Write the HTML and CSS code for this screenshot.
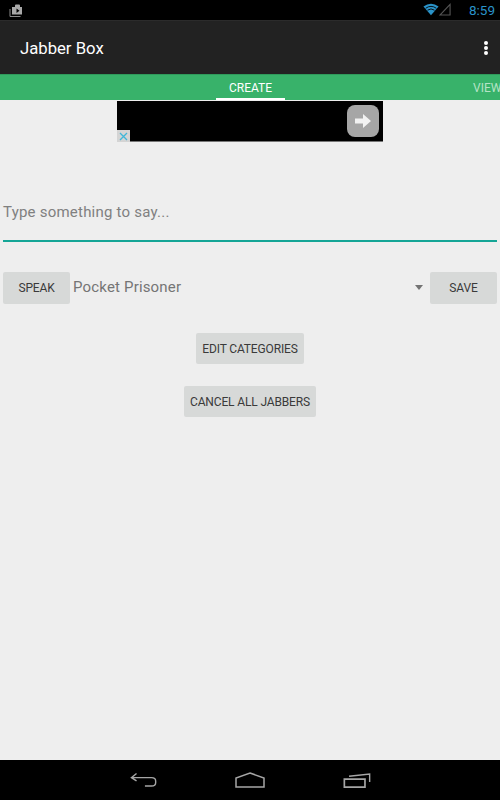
FILE: index.html
```html
<!DOCTYPE html>
<html lang="en">
<head>
  <meta charset="UTF-8">
  <meta name="viewport" content="width=device-width, initial-scale=1.0">
  <link rel="stylesheet" href="styles.css">
</head>
<body>
  <div class="screen">
    <div class="status-bar">
      <svg class="status-left" width="16" height="16" viewBox="0 0 16 16">
        <path d="M2 7v7.500h10.500" fill="none" stroke="#8a8a8a" stroke-width="1"/>
        <path d="M4 5h3V3.500Q7 2.500 8 2.500h3q1 0 1 1V5h2v7.500H4z" fill="#a8a8a8"/>
        <path d="M8.500 6.500l3 2.200-3 2.200z" fill="#000"/>
      </svg>
      <div class="status-right">
        <svg class="wifi" width="16" height="13" viewBox="0 0 18 14">
          <path d="M0.500 3.500Q9-2.500 17.500 3.500L9 13.500z" fill="#2a93c9"/>
          <path d="M3 5.600Q9 1.300 15 5.600M5 7.800Q9 4.900 13 7.800" fill="none" stroke="#000" stroke-width="1"/>
        </svg>
        <svg class="signal" width="12" height="13" viewBox="0 0 13 14">
          <path d="M12 1.500V13H1z" fill="none" stroke="#555" stroke-width="1.200"/>
        </svg>
        <span class="clock">8:59</span>
      </div>
    </div>

    <div class="action-bar">
      <div class="app-title">Jabber Box</div>
      <div class="overflow-menu"><span></span><span></span><span></span></div>
    </div>

    <div class="tabs">
      <div class="tab tab-active">CREATE</div>
      <div class="tab tab-next">VIEW</div>
    </div>

    <div class="content">
      <div class="ad">
        <div class="ad-close">
          <svg width="9" height="9" viewBox="0 0 9 9">
            <path d="M1 1l7 7M8 1L1 8" stroke="#3fb6d8" stroke-width="1.300"/>
          </svg>
        </div>
        <div class="ad-arrow">
          <svg width="16" height="14" viewBox="0 0 16 14">
            <path d="M0 4.500h8V0l8 7-8 7V9.500H0z" fill="#f2f2f2"/>
          </svg>
        </div>
      </div>

      <div class="say-input">Type something to say...</div>

      <div class="speak-row">
        <button class="btn btn-row">SPEAK</button>
        <div class="spinner">
          <span>Pocket Prisoner</span>
          <i class="spinner-arrow"></i>
        </div>
        <button class="btn btn-row">SAVE</button>
      </div>

      <div class="actions">
        <button class="btn">EDIT CATEGORIES</button>
        <button class="btn">CANCEL ALL JABBERS</button>
      </div>
    </div>

    <div class="nav-bar">
      <svg width="28" height="16" viewBox="0 0 30 16">
        <path d="M7 1L1.500 5.500 7 9M2 5.500h21q4.500 0 4.500 3.500v2q0 3.500-4.500 3.500h-7" fill="none" stroke="#a6a6a6" stroke-width="1.500"/>
      </svg>
      <svg class="nav-home" width="30" height="16" viewBox="0 0 30 16">
        <path d="M15 1L29 6v9H1V6z" fill="none" stroke="#a6a6a6" stroke-width="1.500"/>
      </svg>
      <svg class="nav-recent" width="28" height="15" viewBox="0 0 29 16">
        <path d="M1 6.500h22v8.500H1z" fill="none" stroke="#a6a6a6" stroke-width="1.800"/>
        <path d="M6 3.500L28 1v8.500" fill="none" stroke="#a6a6a6" stroke-width="1.500"/>
      </svg>
    </div>
  </div>
</body>
</html>
```

FILE: styles.css
```css
* {
  box-sizing: border-box;
}

body {
  margin: 0;
  font-family: Roboto, sans-serif;
  background: #eeeeee;
}

.screen {
  width: 500px;
  height: 800px;
  display: flex;
  flex-direction: column;
  overflow: hidden;
}

.status-bar {
  height: 20px;
  background: #000000;
  display: flex;
  justify-content: space-between;
  align-items: center;
  padding: 0 5px 0 8px;
}

.status-left {
  display: block;
  margin-top: -1px;
}

.status-right {
  display: flex;
  align-items: center;
}

.wifi,
.signal {
  margin-top: -1px;
}

.clock {
  margin-left: 18px;
  font-size: 13.500px;
  color: #2a93c9;
}

.action-bar {
  height: 54px;
  background: #222222;
  border-top: 1px solid #2b2b2b;
  display: flex;
  justify-content: space-between;
  align-items: center;
  padding: 0 12px 0 20px;
}

.app-title {
  padding-top: 1px;
  font-size: 16.700px;
  color: #ffffff;
}

.overflow-menu {
  display: flex;
  flex-direction: column;
  gap: 1px;
}

.overflow-menu span {
  width: 4px;
  height: 4px;
  border-radius: 50%;
  background: #ffffff;
}

.tabs {
  height: 26px;
  background: #38b26a;
  border-top: 1px solid #2f9a5b;
  display: flex;
  justify-content: flex-start;
  padding-left: 216px;
  white-space: nowrap;
}

.tab {
  font-size: 12px;
  height: 25px;
  line-height: 27px;
  text-align: center;
  flex: none;
}

.tab-active {
  width: 69px;
  color: #ffffff;
  border-bottom: 2px solid #ffffff;
}

.tab-next {
  margin-left: 188px;
  color: #b5e3c6;
}

.content {
  flex: 1;
  display: flex;
  flex-direction: column;
  padding: 1px 3px 0;
  background: #eeeeee;
}

.ad {
  position: relative;
  width: 266px;
  height: 41px;
  margin: 0 auto;
  background: #000000;
  border-bottom: 1px solid #777777;
}

.ad-close {
  position: absolute;
  left: 0;
  bottom: -1px;
  width: 13px;
  height: 12px;
  background: #d4d4d4;
  display: flex;
  align-items: center;
  justify-content: center;
}

.ad-arrow {
  position: absolute;
  top: 4px;
  right: 4px;
  width: 32px;
  height: 32px;
  border-radius: 8px;
  background: #a6a6a6;
  display: flex;
  align-items: center;
  justify-content: center;
}

.say-input {
  height: 60px;
  margin-top: 40px;
  padding-top: 20px;
  font-size: 15px;
  line-height: 20px;
  letter-spacing: 0.22px;
  color: #808080;
  border-bottom: 2px solid #14a596;
}

.speak-row {
  display: flex;
  align-items: center;
  margin-top: 30px;
}

.spinner {
  flex: 1;
  display: flex;
  justify-content: space-between;
  align-items: center;
  padding: 0 7px 2px 3px;
  font-size: 15px;
  letter-spacing: 0.17px;
  color: #757575;
}

.spinner-arrow {
  width: 0;
  height: 0;
  margin-top: 1px;
  border-left: 4px solid transparent;
  border-right: 4px solid transparent;
  border-top: 5px solid #737373;
}

.btn {
  height: 31px;
  padding: 0 6px;
  border: none;
  border-radius: 2px;
  background: #d7d9d8;
  font-family: Roboto, sans-serif;
  font-size: 12px;
  letter-spacing: -0.15px;
  color: #3a3a3a;
}

.btn-row {
  width: 67px;
  height: 32px;
  padding: 0;
}

.actions {
  display: flex;
  flex-direction: column;
  align-items: center;
  gap: 22px;
  margin-top: 29px;
}

.nav-bar {
  height: 40px;
  background: #000000;
  display: flex;
  align-items: center;
  padding-left: 130px;
}

.nav-home {
  margin-left: 77px;
}

.nav-recent {
  margin-left: 78px;
}
```
